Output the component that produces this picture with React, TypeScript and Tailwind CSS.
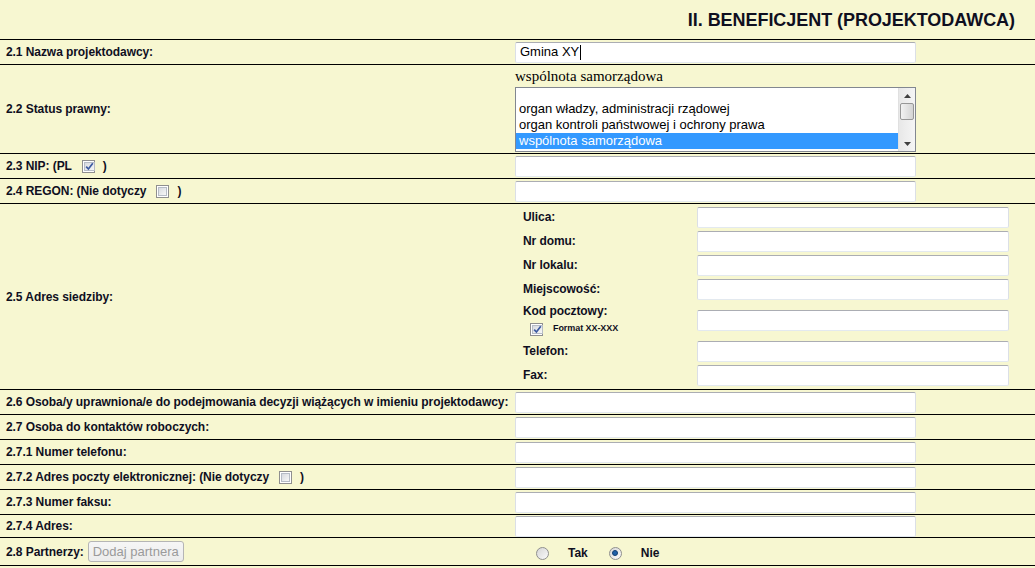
import React from "react";

function Check({ checked }: { checked?: boolean }) {
  return (
    <span className="inline-flex w-[13px] h-[13px] border border-[#8f8f8f] bg-white p-[1px] align-middle">
      <span className="flex-1 flex items-center justify-center border border-[#b6bcc6] bg-gradient-to-br from-[#d8dbe0] to-[#f7f7f7]">
        {checked && (
          <svg width="9" height="9" viewBox="0 0 9 9">
            <path d="M1.2 4.6 L3.4 7 L7.8 1.2" stroke="#3c5aa0" strokeWidth="1.7" fill="none" />
          </svg>
        )}
      </span>
    </span>
  );
}

function Radio({ checked }: { checked?: boolean }) {
  return (
    <span className="inline-flex w-[13px] h-[13px] rounded-full border border-[#8f8f8f] bg-gradient-to-br from-[#d6d6d6] to-[#fafafa] items-center justify-center">
      {checked && (
        <span className="w-[6px] h-[6px] rounded-full bg-[#1d5fa8] border border-[#103d73]" />
      )}
    </span>
  );
}

function Input({ w = "w-[401px]", children }: { w?: string; children?: React.ReactNode }) {
  return (
    <div
      className={`${w} h-[21px] bg-white border border-t-[#abadb3] border-l-[#dbdfe6] border-r-[#dbdfe6] border-b-[#e3e9ef] rounded-[2px] flex items-center pl-[4px] text-[13px] text-black font-['Liberation_Sans',sans-serif]`}
    >
      {children}
    </div>
  );
}

function Row({
  h,
  label,
  children,
}: {
  h: string;
  label: React.ReactNode;
  children?: React.ReactNode;
}) {
  return (
    <div className={`flex border-t border-black ${h}`}>
      <div className="w-[515px] pl-[6px] flex items-center font-bold text-[12px] tracking-[-0.07px] whitespace-nowrap">{label}</div>
      <div className="flex-1 flex items-center">{children}</div>
    </div>
  );
}

function SubRow({ h, label, children }: { h: string; label: React.ReactNode; children?: React.ReactNode }) {
  return (
    <div className={`flex ${h}`}>
      <div className="w-[182px] pl-[8px] flex flex-col justify-center font-bold text-[12px] tracking-[-0.07px]">{label}</div>
      <div className="flex items-center">
        <Input w="w-[312px]" />
      </div>
    </div>
  );
}

export default function App() {
  return (
    <div className="w-[1035px] h-[568px] bg-[#f7f7d1] text-[#0f0f1f] font-['Liberation_Sans',Arial,sans-serif] overflow-hidden">
      <div className="h-[39px] flex items-center justify-end pr-[20px] pt-[2px] text-[18px] font-bold tracking-[-0.05px]">
        II. BENEFICJENT (PROJEKTODAWCA)
      </div>

      <Row h="h-[25px]" label="2.1 Nazwa projektodawcy:">
        <Input>
          <span>Gmina XY</span>
          <span className="w-[1px] h-[15px] bg-black ml-[1px]" />
        </Input>
      </Row>

      <div className="flex border-t border-black h-[89px]">
        <div className="w-[515px] pl-[6px] flex items-center font-bold text-[12px] tracking-[-0.07px]">2.2 Status prawny:</div>
        <div className="flex flex-col pt-[1px]">
          <div className="h-[21px] text-[15px] leading-[21px] text-black font-['Liberation_Serif',serif]">
            wspólnota samorządowa
          </div>
          <div className="w-[401px] h-[65px] border border-[#828790] bg-white flex overflow-hidden">
            <div className="flex-1 overflow-hidden text-[13px] leading-[16px] text-black font-['Liberation_Sans',sans-serif]">
              <div className="mt-[-3px]">
                <div className="h-[16px] pl-[3px]" />
                <div className="h-[16px] pl-[3px]">organ władzy, administracji rządowej</div>
                <div className="h-[16px] pl-[3px]">organ kontroli państwowej i ochrony prawa</div>
                <div className="h-[16px] pl-[3px] bg-[#3399ff] text-white">wspólnota samorządowa</div>
                <div className="h-[16px] pl-[3px]">państwowa osoba prawna</div>
              </div>
            </div>
            <div className="w-[17px] flex flex-col bg-gradient-to-r from-[#e8e8e8] to-[#f5f5f5] border-l border-[#e0e0e0]">
              <div className="h-[15px] flex items-center justify-center">
                <svg width="7" height="4" viewBox="0 0 7 4">
                  <path d="M0 4 L3.5 0 L7 4 Z" fill="#404040" />
                </svg>
              </div>
              <div className="h-[17px] mx-[1px] rounded-[2px] border border-[#979797] bg-gradient-to-r from-[#f2f2f2] to-[#d4d4d4]" />
              <div className="flex-1" />
              <div className="h-[15px] flex items-center justify-center">
                <svg width="7" height="4" viewBox="0 0 7 4">
                  <path d="M0 0 L3.5 4 L7 0 Z" fill="#404040" />
                </svg>
              </div>
            </div>
          </div>
        </div>
      </div>

      <Row
        h="h-[25px]"
        label={
          <>
            <span>2.3 NIP: (PL</span>
            <span className="ml-[10px] mr-[8px] inline-flex">
              <Check checked />
            </span>
            <span>)</span>
          </>
        }
      >
        <Input />
      </Row>

      <Row
        h="h-[25px]"
        label={
          <>
            <span>2.4 REGON: (Nie dotyczy</span>
            <span className="ml-[10px] mr-[8px] inline-flex">
              <Check />
            </span>
            <span>)</span>
          </>
        }
      >
        <Input />
      </Row>

      <div className="flex border-t border-black h-[186px]">
        <div className="w-[515px] pl-[6px] flex items-center font-bold text-[12px] tracking-[-0.07px]">2.5 Adres siedziby:</div>
        <div className="flex flex-col pt-[1px]">
          <SubRow h="h-[24px]" label="Ulica:" />
          <SubRow h="h-[24px]" label="Nr domu:" />
          <SubRow h="h-[24px]" label="Nr lokalu:" />
          <SubRow h="h-[24px]" label="Miejscowość:" />
          <SubRow
            h="h-[38px]"
            label={
              <>
                <div className="h-[16px] leading-[16px]">Kod pocztowy:</div>
                <div className="h-[16px] flex items-center ml-[7px] mt-[2px]">
                  <Check checked />
                  <span className="ml-[10px] text-[9px] font-bold">Format XX-XXX</span>
                </div>
              </>
            }
          />
          <SubRow h="h-[24px]" label="Telefon:" />
          <SubRow h="h-[24px]" label="Fax:" />
        </div>
      </div>

      <Row h="h-[25px]" label="2.6 Osoba/y uprawniona/e do podejmowania decyzji wiążących w imieniu projektodawcy:">
        <Input />
      </Row>
      <Row h="h-[25px]" label="2.7 Osoba do kontaktów roboczych:">
        <Input />
      </Row>
      <Row h="h-[25px]" label="2.7.1 Numer telefonu:">
        <Input />
      </Row>
      <Row
        h="h-[25px]"
        label={
          <>
            <span>2.7.2 Adres poczty elektronicznej: (Nie dotyczy</span>
            <span className="ml-[10px] mr-[8px] inline-flex">
              <Check />
            </span>
            <span>)</span>
          </>
        }
      >
        <Input />
      </Row>
      <Row h="h-[25px]" label="2.7.3 Numer faksu:">
        <Input />
      </Row>
      <Row h="h-[23px]" label="2.7.4 Adres:">
        <Input />
      </Row>
      <div className="flex border-t border-b border-black h-[29px]">
        <div className="w-[515px] pl-[6px] flex items-center font-bold text-[12px] tracking-[-0.07px]">
          <span>2.8 Partnerzy:</span>
          <span className="ml-[4px] h-[21px] px-[4px] flex items-center rounded-[3px] border border-[#b5b5b5] bg-gradient-to-b from-[#f6f6f6] to-[#ececec] text-[13px] font-normal tracking-normal text-[#9a9a9a]">
            Dodaj partnera
          </span>
        </div>
        <div className="flex items-center pl-[21px] pt-[3px] font-bold text-[12px]">
          <Radio />
          <span className="ml-[19px]">Tak</span>
          <span className="ml-[21px] inline-flex">
            <Radio checked />
          </span>
          <span className="ml-[19px]">Nie</span>
        </div>
      </div>
    </div>
  );
}
